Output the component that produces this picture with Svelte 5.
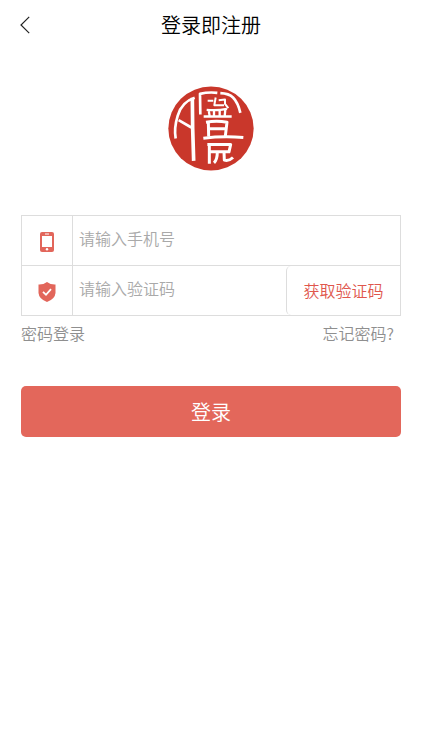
<script>
  let phone = $state('');
  let code = $state('');
</script>

<main>
  <header>
    <button class="back" type="button" aria-label="返回">
      <svg width="10" height="18" viewBox="0 0 10 18" fill="none" stroke="#222" stroke-width="1.2"><path d="M9.2 .8 1 9l8.2 8.2" /></svg>
    </button>
    <h1>登录即注册</h1>
  </header>

  <svg class="logo" viewBox="24 19 258 254" role="img" aria-label="印章标志">
    <ellipse cx="153" cy="146" rx="128" ry="126" fill="#c9372b" />
    <g fill="none" stroke="#fff" stroke-width="8" stroke-linejoin="round">
      <path d="M104 54C76 63 60 84 53 108 45 134 43 154 47 176" />
      <path d="M56 121 94 143" />
      <path d="M97 54 98 145 101 243" stroke-width="11" />
      <path d="M121 104 120 42 Q145 36 172 39M181 40Q207 41 219 53 234 68 241 99" />
      <path d="M143 63H160M167 53 163 76H192M176 61 195 59 195 72 205 85" stroke-width="6" />
      <path d="M140 90Q172 93 201 87M146 91 149 109M162 91V109M179 91V109M196 89 194 109M131 110H215" stroke-width="7" />
      <path d="M138 127Q170 122 201 127L196 169M145 127 146 170M145 147H197" stroke-width="9" />
      <path d="M130 175Q190 168 250 173" stroke-width="9" />
      <path d="M142 194H212L207 216H148M148 194V252M172 216Q172 240 162 249M192 216 193 241Q206 245 219 233" stroke-width="9" />
    </g>
  </svg>

  <form onsubmit={(e) => e.preventDefault()}>
    <div class="fields">
      <div class="row">
        <label for="phone" aria-label="手机号">
          <svg width="16" height="20" viewBox="0 0 16 20">
            <rect x="1" y="0" width="14" height="20" rx="2" fill="#e2665b" />
            <path d="M3 4h10v11H3z" fill="#fff" />
            <path d="M6 2h4" stroke="#fff" stroke-width="1" />
            <circle cx="8" cy="17.3" r="1.2" fill="#fff" />
          </svg>
        </label>
        <input id="phone" type="tel" placeholder="请输入手机号" bind:value={phone} />
      </div>
      <div class="row">
        <label for="code" aria-label="验证码">
          <svg width="18" height="20" viewBox="0 0 18 20">
            <path d="M9 0Q12.5 2.7 17.5 2.5V11Q17 17 9 20 1 17 .5 11V2.5Q5.500 2.700 9 0Z" fill="#e2665b" />
            <path d="m5 9.800 3 3 5-5.600" fill="none" stroke="#fff" stroke-width="1.800" />
          </svg>
        </label>
        <input id="code" type="text" placeholder="请输入验证码" bind:value={code} />
        <button class="get-code" type="button">获取验证码</button>
      </div>
    </div>
    <nav>
      <a href="#password">密码登录</a>
      <a class="forgot" href="#forgot">忘记密码?</a>
    </nav>
    <button class="submit" type="submit">登录</button>
  </form>
</main>

<style>
  :global(body) {
    margin: 0;
    background: #fff;
  }
  main {
    display: flex;
    flex-direction: column;
    font-family: 'Noto Sans CJK SC', sans-serif;
    font-size: 16px;
    font-weight: 350;
  }
  button,
  input {
    font: inherit;
    border: 0;
    padding: 0;
    background: none;
  }
  header {
    display: grid;
    grid-template-columns: 50px 1fr 50px;
    align-items: center;
    height: 50px;
  }
  .back {
    display: flex;
    align-items: center;
    height: 50px;
    padding-left: 20px;
  }
  h1 {
    margin: 0;
    font-size: 20px;
    font-weight: 350;
    line-height: 50px;
    text-align: center;
    color: #000;
  }
  .logo {
    width: 86px;
    height: 85px;
    margin: 36px auto 44px;
  }
  form {
    padding: 0 21px;
  }
  .fields {
    border: 1px solid #ddd;
  }
  .row {
    display: flex;
    height: 49px;
  }
  .row + .row {
    border-top: 1px solid #ddd;
  }
  label {
    display: flex;
    align-items: center;
    justify-content: center;
    width: 51px;
    padding-top: 2px;
    box-sizing: border-box;
    border-right: 1px solid #ddd;
  }
  input {
    flex: 1;
    min-width: 0;
    padding: 0 6px 6px;
    color: #333;
    outline: none;
  }
  input::placeholder {
    color: #a9a9a9;
    opacity: 1;
  }
  .get-code {
    width: 114px;
    padding-bottom: 2px;
    border-left: 1px solid #ddd;
    border-radius: 5px 0 0 5px;
    color: #e0574d;
  }
  nav {
    display: flex;
    justify-content: space-between;
    line-height: 34px;
  }
  a {
    color: #8f8f8f;
    text-decoration: none;
  }
  .forgot {
    padding-right: 7px;
  }
  .submit {
    width: 100%;
    height: 51px;
    margin-top: 36px;
    border-radius: 5px;
    background: #e3675b;
    color: #fff;
    font-size: 20px;
  }
</style>
